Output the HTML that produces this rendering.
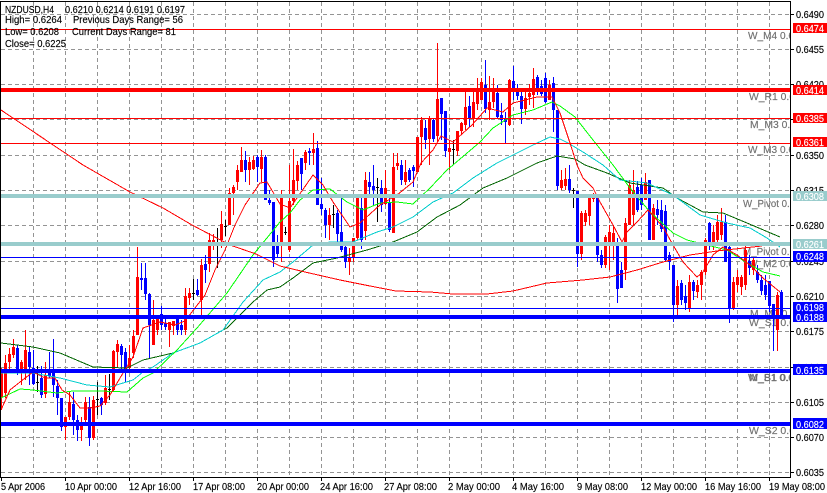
<!DOCTYPE html>
<html>
<head>
<meta charset="utf-8">
<style>
html,body{margin:0;padding:0;background:#fff;width:827px;height:493px;overflow:hidden}
svg{display:block}
text{font-family:"Liberation Sans",sans-serif;font-size:10.5px;fill:#000;stroke:#000;stroke-width:.15}
.g text{fill:#707070;stroke:#707070}
.w text{fill:#fff;stroke:#fff}
</style>
</head>
<body>
<svg width="827" height="493" viewBox="0 0 827 493" xmlns="http://www.w3.org/2000/svg">
<defs><clipPath id="c"><rect x="0" y="0" width="790" height="477"/></clipPath></defs>
<rect width="827" height="493" fill="#fff"/>

<!-- grid -->
<path shape-rendering="crispEdges" fill="none" stroke="#949494" stroke-width="1" stroke-dasharray="4 3" d="M33.5 2V477M65.5 2V477M97.5 2V477M129.5 2V477M161.5 2V477M193.5 2V477M225.5 2V477M257.5 2V477M289.5 2V477M321.5 2V477M353.5 2V477M385.5 2V477M417.5 2V477M449.5 2V477M481.5 2V477M513.5 2V477M545.5 2V477M577.5 2V477M609.5 2V477M641.5 2V477M673.5 2V477M705.5 2V477M737.5 2V477M769.5 2V477
M1 14.5H790M1 49.5H790M1 84.5H790M1 119.5H790M1 155.5H790M1 190.5H790M1 225.5H790M1 261.5H790M1 296.5H790M1 331.5H790M1 367.5H790M1 402.5H790M1 437.5H790M1 472.5H790"/>

<!-- grey object labels -->
<g class="g" clip-path="url(#c)">
<text x="748" y="39" textLength="46" lengthAdjust="spacingAndGlyphs">W_M4 0.6</text>
<text x="749" y="100" textLength="46" lengthAdjust="spacingAndGlyphs">W_R1 0.6</text>
<text x="750" y="128" textLength="46" lengthAdjust="spacingAndGlyphs">M_M3 0.6</text>
<text x="748" y="153" textLength="46" lengthAdjust="spacingAndGlyphs">W_M3 0.6</text>
<text x="743" y="207" textLength="52" lengthAdjust="spacingAndGlyphs">W_Pivot 0.6</text>
<text x="743" y="255" textLength="52" lengthAdjust="spacingAndGlyphs">M_Pivot 0.6</text>
<text x="748" y="267" textLength="46" lengthAdjust="spacingAndGlyphs">W_M2 0.6</text>
<text x="750" y="317" textLength="46" lengthAdjust="spacingAndGlyphs">M_M0 0.6</text>
<text x="749" y="326" textLength="46" lengthAdjust="spacingAndGlyphs">W_S1 0.6</text>
<text x="748" y="381" textLength="46" lengthAdjust="spacingAndGlyphs">W_S1 0.6</text>
<text x="749" y="381" textLength="46" lengthAdjust="spacingAndGlyphs">M_B1 0.6</text>
<text x="749" y="434" textLength="46" lengthAdjust="spacingAndGlyphs">W_S2 0.6</text>
</g>

<g shape-rendering="crispEdges" fill="none">
<!-- red wicks -->
<path stroke="#f00" stroke-width="1" d="M1.5 368V410M5.5 355V398M9.5 348V370M13.5 339V358M21.5 360V385M25.5 330V380M45.5 362V398M65.5 417V440M69.5 392V420M81.5 417V441M85.5 397V425M93.5 396V440M105.5 375V405M113.5 350V392M117.5 340V368M129.5 345V370M133.5 330V358M137.5 247V335M153.5 300V345M157.5 320V335M169.5 322V347M173.5 321V335M185.5 288V335M189.5 288V305M201.5 259V315M209.5 233V272M213.5 234V250M221.5 211V248M229.5 188V225M233.5 185V215M237.5 165V190M241.5 147V172M249.5 157V185M253.5 156V170M261.5 150V182M281.5 190V262M289.5 165V252M293.5 149V205M297.5 161V190M305.5 150V170M313.5 133V165M329.5 208V240M349.5 248V275M353.5 238V262M357.5 195V240M365.5 172V240M385.5 170V205M393.5 153V233M397.5 153V170M405.5 160V185M417.5 137V172M421.5 117V165M429.5 116V165M437.5 43V142M449.5 140V170M457.5 131V156M461.5 122V135M465.5 92V130M473.5 92V127M477.5 78V110M481.5 78V100M489.5 76V120M493.5 78V108M509.5 79V126M525.5 92V115M529.5 84V105M533.5 68V108M549.5 80V100M561.5 170V190M565.5 168V190M581.5 211V260M585.5 210V226M589.5 197V225M593.5 193V202M605.5 235V268M609.5 225V270M613.5 225V260M625.5 218V280M629.5 180V225M633.5 170V225M645.5 173V200M653.5 204V240M677.5 280V315M689.5 275V312M697.5 280V298M701.5 270V300M705.5 238V275M713.5 225V250M717.5 215V245M721.5 208V240M733.5 277V310M737.5 270V292M741.5 275V295M745.5 245V290M753.5 258V275M777.5 292V351"/>
<!-- red bodies -->
<path stroke="#f00" stroke-width="3" d="M1.5 372V397M5.5 363V393M9.5 354V362M13.5 347V355M21.5 362V372M25.5 350V372M45.5 375V394M65.5 417V427M69.5 402V417M81.5 426V430M85.5 402V420M93.5 400V438M105.5 388V403M113.5 351V390M117.5 344V352M129.5 358V368M133.5 336V353M137.5 277V335M153.5 320V345M157.5 318V330M169.5 322V330M173.5 321V326M185.5 296V330M189.5 293V298M201.5 265V300M209.5 240V264M213.5 240V242M221.5 224V240M229.5 193V225M233.5 187V193M237.5 170V182M241.5 160V172M249.5 162V170M253.5 160V169M261.5 157V169M281.5 195V245M289.5 201V250M293.5 180V201M297.5 165V181M305.5 152V163M313.5 149V153M329.5 215V225M349.5 258V262M353.5 238V258M357.5 197V238M365.5 180V231M385.5 188V204M393.5 167V233M397.5 163V166M405.5 172V182M417.5 137V172M421.5 120V137M429.5 118V139M437.5 99V136M449.5 148V152M457.5 131V151M461.5 123V131M465.5 107V125M473.5 102V118M477.5 90V104M481.5 82V100M489.5 102V110M493.5 90V102M509.5 80V125M525.5 98V109M529.5 93V97M533.5 79V95M549.5 85V100M561.5 180V188M565.5 179V186M581.5 213V254M585.5 213V222M589.5 198V216M593.5 198V199M605.5 237V265M609.5 232V242M613.5 233V242M625.5 223V270M629.5 185V225M633.5 190V215M645.5 182V200M653.5 208V240M677.5 286V305M689.5 282V308M697.5 285V292M701.5 272V285M705.5 240V272M713.5 232V245M717.5 222V240M721.5 222V235M733.5 282V308M737.5 277V285M741.5 277V287M745.5 250V285M753.5 260V270M777.5 295V330"/>
<!-- blue wicks -->
<path stroke="#00f" stroke-width="1" d="M17.5 345V375M29.5 347V385M33.5 350V385M41.5 366V398M49.5 352V378M53.5 339V397M57.5 380V415M61.5 398V431M73.5 392V435M77.5 415V441M89.5 397V446M101.5 397V415M121.5 344V370M125.5 348V382M141.5 263V290M145.5 263V300M149.5 293V358M161.5 306V330M165.5 318V330M177.5 318V335M181.5 320V335M197.5 279V296M205.5 255V283M245.5 151V182M257.5 155V182M265.5 155V200M269.5 190V205M273.5 202V267M277.5 235V258M301.5 158V190M309.5 148V165M317.5 141V205M321.5 178V215M325.5 208V238M337.5 210V245M341.5 197V252M345.5 245V268M361.5 195V249M369.5 172V195M373.5 165V205M381.5 180V212M389.5 195V232M401.5 160V185M409.5 168V182M413.5 165V187M425.5 120V149M433.5 118V142M441.5 98V140M445.5 111V157M469.5 96V127M485.5 60V113M497.5 85V118M501.5 103V125M505.5 112V143M513.5 66V100M517.5 84V100M521.5 90V124M537.5 75V95M541.5 80V96M545.5 73V103M553.5 77V132M557.5 110V190M569.5 165V193M577.5 191V267M597.5 197V262M601.5 250V268M617.5 238V303M621.5 262V288M637.5 181V212M641.5 178V210M649.5 180V240M657.5 200V225M661.5 200V232M665.5 205V262M669.5 252V270M673.5 265V322M681.5 280V305M685.5 285V310M693.5 280V300M709.5 222V250M725.5 215V262M729.5 245V323M749.5 255V275M757.5 265V283M761.5 275V295M765.5 275V300M769.5 281V312M773.5 304V351M781.5 290V318"/>
<!-- blue bodies -->
<path stroke="#00f" stroke-width="3" d="M17.5 348V372M29.5 352V367M33.5 368V384M41.5 378V395M49.5 372V376M53.5 372V385M57.5 386V398M61.5 398V427M73.5 404V420M77.5 420V430M89.5 407V438M101.5 398V405M121.5 346V355M125.5 352V370M141.5 278V280M145.5 278V294M149.5 294V325M161.5 314V325M165.5 323V327M177.5 318V330M181.5 325V330M197.5 290V295M205.5 264V270M245.5 160V170M257.5 157V167M265.5 157V200M269.5 200V203M273.5 202V260M277.5 242V254M301.5 158V174M309.5 151V153M317.5 148V205M321.5 204V209M325.5 210V225M337.5 213V234M341.5 232V250M345.5 247V262M361.5 208V240M369.5 182V187M373.5 186V190M381.5 188V205M389.5 202V230M401.5 165V180M409.5 170V180M413.5 167V171M425.5 128V140M433.5 120V139M441.5 98V114M445.5 111V151M469.5 106V118M485.5 85V109M497.5 93V117M501.5 115V120M505.5 118V122M513.5 81V90M517.5 90V96M521.5 96V109M537.5 77V92M541.5 86V94M545.5 78V102M553.5 83V110M557.5 110V186M569.5 179V190M577.5 191V254M597.5 198V255M601.5 255V265M617.5 243V289M621.5 270V288M637.5 187V210M641.5 185V205M649.5 180V240M657.5 209V215M661.5 210V229M665.5 211V260M669.5 255V262M673.5 265V305M681.5 283V300M685.5 296V303M693.5 282V291M709.5 223V245M725.5 222V262M729.5 247V308M749.5 261V268M757.5 272V280M761.5 280V291M765.5 285V295M769.5 281V306M773.5 304V317M781.5 292V315"/>
<!-- doji -->
<path stroke="#000" stroke-width="1" d="M37.5 366V392M36 382.5H39M97.5 382V415M96 399.5H99M109.5 374V400M108 389.5H111M193.5 279V300M192 293.5H195M217.5 228V268M216 242.5H219M225.5 220V236M224 226.5H227M285.5 227V235M284 232.5H287M333.5 205V228M332 214.5H335M377.5 178V222M376 187.5H379M453.5 140V165M452 149.5H455M573.5 188V208M572 190.5H575"/>

<!-- moving averages -->
<polyline stroke="#006400" stroke-width="1" points="1,343 33,347 60,353 93,367 127,368 143,360 173,353 200,343 223,330 227,328 253,302 267,290 280,287 293,278 313,263 337,258 367,250 393,242 417,232 437,217 460,205 483,188 507,178 533,165 537,163 557,156 575,159 585,165 607,173 630,183 663,188 677,198 703,212 723,213 747,223 780,237"/>
<polyline stroke="#00cccc" stroke-width="1" points="1,373 33,373 60,378 87,385 110,387 133,380 143,372 153,367 173,353 200,343 223,330 243,302 263,280 280,272 293,262 313,245 330,242 353,242 377,232 393,227 413,217 433,202 453,193 473,178 497,163 513,155 533,145 550,137 560,139 568,143 583,152 603,165 620,180 647,183 673,195 700,215 727,223 750,228 767,238 780,247"/>
<polyline stroke="#00ff00" stroke-width="1" points="1,398 20,389 33,390 57,393 73,391 100,391 127,392 143,378 153,373 177,350 197,328 227,293 253,255 280,222 290,213 300,200 313,190 330,189 347,202 363,210 380,203 397,202 413,204 430,188 447,170 453,165 480,142 493,128 513,115 533,110 552,102 560,106 575,117 593,140 613,165 630,188 650,212 673,233 687,240 707,245 727,250 747,263 763,272 780,276"/>
<polyline stroke="#f00" stroke-width="1" points="1,410 10,390 20,382 33,372 45,378 55,378 62,390 70,395 80,408 90,408 100,406 110,395 120,378 133,357 143,328 160,322 175,325 185,321 195,308 205,295 215,270 225,250 235,225 245,205 260,183 267,182 280,204 290,208 313,175 323,185 333,202 350,227 360,223 380,205 397,195 413,182 421,163 433,150 441,136 453,142 472,125 487,108 503,112 513,103 537,97 552,97 560,113 570,143 577,165 583,178 593,188 600,202 613,225 622,242 627,232 637,222 648,210 663,227 673,245 683,262 697,277 703,272 713,255 723,247 737,255 750,265 763,278 780,292"/>
<polyline stroke="#f00" stroke-width="1" points="1,110 83,165 130,192 163,208 192,225 230,245 256,254 280,266 305,272 340,280 370,286 396,291 430,292 453,294 487,294 513,291 547,283 583,280 610,277 637,270 663,262 690,255 717,251 762,246"/>

<!-- horizontal levels -->
<path stroke="#f00" stroke-width="1" d="M1 29.5H790M1 118.5H790M1 143.5H790"/>
<rect x="1" y="88" width="789" height="4" fill="#f00"/>
<rect x="1" y="194" width="789" height="4" fill="#99cccc"/>
<rect x="1" y="242" width="789" height="4" fill="#99cccc"/>
<path stroke="#00f" stroke-width="1" d="M1 257.5H790M1 308.5H790"/>
<rect x="1" y="315" width="789" height="4" fill="#00f"/>
<rect x="1" y="369" width="789" height="4" fill="#00f"/>
<rect x="1" y="422" width="789" height="4" fill="#00f"/>

<!-- frame and ticks -->
<path stroke="#000" stroke-width="1" d="M0 1.5H790.5M0.5 1V478M790.5 1V478M0 477.5H791M790 14.5H794M790 49.5H794M790 84.5H794M790 119.5H794M790 155.5H794M790 190.5H794M790 225.5H794M790 261.5H794M790 296.5H794M790 331.5H794M790 367.5H794M790 402.5H794M790 437.5H794M790 472.5H794M1.5 477V481M65.5 477V481M129.5 477V481M193.5 477V481M257.5 477V481M321.5 477V481M385.5 477V481M449.5 477V481M513.5 477V481M577.5 477V481M641.5 477V481M705.5 477V481M769.5 477V481"/>
</g>

<!-- top-left info -->
<text x="5" y="13" textLength="49" lengthAdjust="spacingAndGlyphs">NZDUSD,H4</text>
<text x="65" y="13" textLength="120" lengthAdjust="spacingAndGlyphs">0.6210 0.6214 0.6191 0.6197</text>
<text x="5" y="23" textLength="57" lengthAdjust="spacingAndGlyphs">High= 0.6264</text>
<text x="73" y="23" textLength="110" lengthAdjust="spacingAndGlyphs">Previous Days Range= 56</text>
<text x="5" y="35" textLength="54" lengthAdjust="spacingAndGlyphs">Low= 0.6208</text>
<text x="72" y="35" textLength="104" lengthAdjust="spacingAndGlyphs">Current Days Range= 81</text>
<text x="5" y="47" textLength="61" lengthAdjust="spacingAndGlyphs">Close= 0.6225</text>

<!-- price axis -->
<text x="796" y="18" textLength="28" lengthAdjust="spacingAndGlyphs">0.6490</text>
<text x="796" y="53" textLength="28" lengthAdjust="spacingAndGlyphs">0.6455</text>
<text x="796" y="88" textLength="28" lengthAdjust="spacingAndGlyphs">0.6420</text>
<text x="796" y="159" textLength="28" lengthAdjust="spacingAndGlyphs">0.6350</text>
<text x="796" y="194" textLength="28" lengthAdjust="spacingAndGlyphs">0.6315</text>
<text x="796" y="229" textLength="28" lengthAdjust="spacingAndGlyphs">0.6280</text>
<text x="796" y="265" textLength="28" lengthAdjust="spacingAndGlyphs">0.6245</text>
<text x="796" y="300" textLength="28" lengthAdjust="spacingAndGlyphs">0.6210</text>
<text x="796" y="335" textLength="28" lengthAdjust="spacingAndGlyphs">0.6175</text>
<text x="796" y="371" textLength="28" lengthAdjust="spacingAndGlyphs">0.6140</text>
<text x="796" y="406" textLength="28" lengthAdjust="spacingAndGlyphs">0.6105</text>
<text x="796" y="441" textLength="28" lengthAdjust="spacingAndGlyphs">0.6070</text>
<text x="796" y="476" textLength="28" lengthAdjust="spacingAndGlyphs">0.6035</text>

<!-- price boxes -->
<g shape-rendering="crispEdges">
<rect x="793" y="23" width="34" height="10" fill="#f00"/>
<rect x="793" y="85" width="34" height="10" fill="#f00"/>
<rect x="793" y="113" width="34" height="10" fill="#f00"/>
<rect x="793" y="137" width="34" height="10" fill="#f00"/>
<rect x="793" y="191" width="34" height="10" fill="#99cccc"/>
<rect x="793" y="239" width="34" height="10" fill="#99cccc"/>
<rect x="793" y="251" width="34" height="11" fill="#00f"/>
<rect x="793" y="302" width="34" height="20" fill="#00f"/>
<rect x="793" y="364" width="34" height="11" fill="#00f"/>
<rect x="793" y="418" width="34" height="11" fill="#00f"/>
</g>
<g class="w">
<text x="796" y="32" textLength="28" lengthAdjust="spacingAndGlyphs">0.6474</text>
<text x="796" y="94" textLength="28" lengthAdjust="spacingAndGlyphs">0.6414</text>
<text x="796" y="122" textLength="28" lengthAdjust="spacingAndGlyphs">0.6385</text>
<text x="796" y="146" textLength="28" lengthAdjust="spacingAndGlyphs">0.6361</text>
<text x="796" y="200" textLength="28" lengthAdjust="spacingAndGlyphs">0.6308</text>
<text x="796" y="248" textLength="28" lengthAdjust="spacingAndGlyphs">0.6261</text>
<text x="796" y="260" textLength="28" lengthAdjust="spacingAndGlyphs">0.6248</text>
<text x="796" y="311" textLength="28" lengthAdjust="spacingAndGlyphs">0.6198</text>
<text x="796" y="321" textLength="28" lengthAdjust="spacingAndGlyphs">0.6188</text>
<text x="796" y="374" textLength="28" lengthAdjust="spacingAndGlyphs">0.6135</text>
<text x="796" y="428" textLength="28" lengthAdjust="spacingAndGlyphs">0.6082</text>
</g>

<!-- time axis -->
<text x="1" y="490" textLength="44" lengthAdjust="spacingAndGlyphs">5 Apr 2006</text>
<text x="65" y="490" textLength="52" lengthAdjust="spacingAndGlyphs">10 Apr 00:00</text>
<text x="129" y="490" textLength="52" lengthAdjust="spacingAndGlyphs">12 Apr 16:00</text>
<text x="193" y="490" textLength="52" lengthAdjust="spacingAndGlyphs">17 Apr 08:00</text>
<text x="257" y="490" textLength="52" lengthAdjust="spacingAndGlyphs">20 Apr 00:00</text>
<text x="320" y="490" textLength="53" lengthAdjust="spacingAndGlyphs">24 Apr 16:00</text>
<text x="384" y="490" textLength="53" lengthAdjust="spacingAndGlyphs">27 Apr 08:00</text>
<text x="448" y="490" textLength="52" lengthAdjust="spacingAndGlyphs">2 May 00:00</text>
<text x="512" y="490" textLength="52" lengthAdjust="spacingAndGlyphs">4 May 16:00</text>
<text x="577" y="490" textLength="51" lengthAdjust="spacingAndGlyphs">9 May 08:00</text>
<text x="641" y="490" textLength="56" lengthAdjust="spacingAndGlyphs">12 May 00:00</text>
<text x="705" y="490" textLength="56" lengthAdjust="spacingAndGlyphs">16 May 16:00</text>
<text x="769" y="490" textLength="56" lengthAdjust="spacingAndGlyphs">19 May 08:00</text>
</svg>
</body>
</html>
